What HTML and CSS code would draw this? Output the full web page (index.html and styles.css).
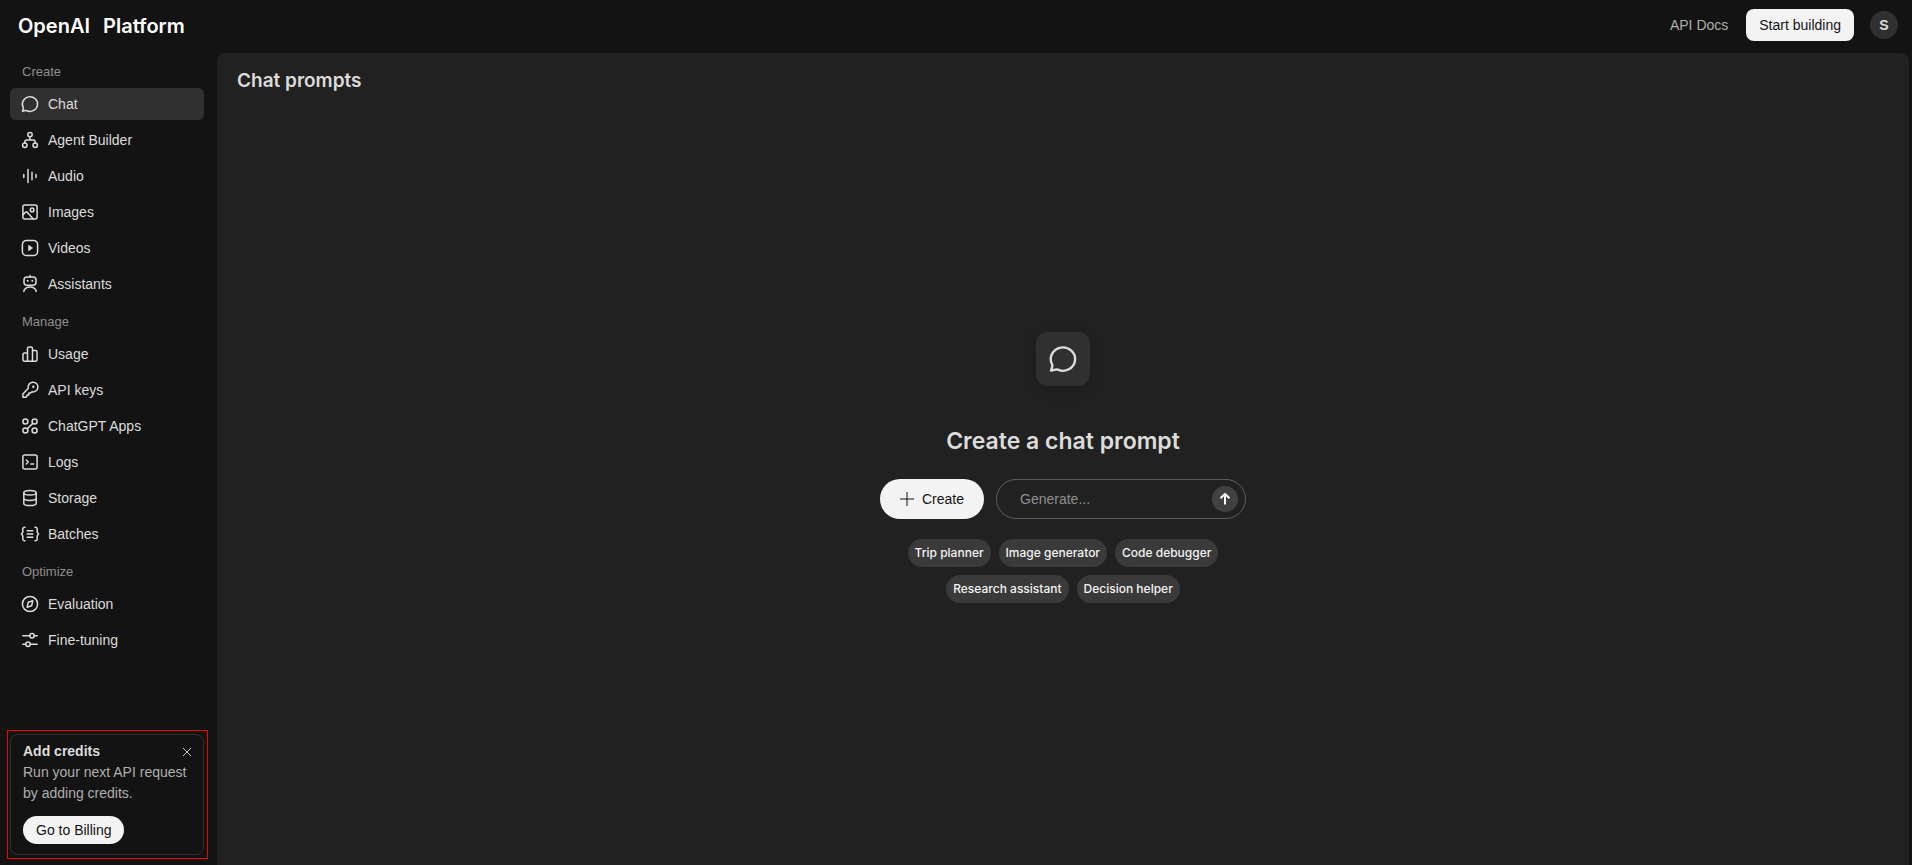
FILE: index.html
```html
<!DOCTYPE html>
<html lang="en">
<head>
  <meta charset="UTF-8">
  <meta name="viewport" content="width=device-width, initial-scale=1">
  <title>Chat prompts - OpenAI Platform</title>
  <link rel="stylesheet" href="styles.css">
</head>
<body>
  <header class="topbar">
    <a class="brand" href="#"><span>OpenAI</span><span>Platform</span></a>
    <div class="topbar-actions">
      <a class="docs-link" href="#">API Docs</a>
      <button class="start-btn" type="button">Start building</button>
      <button class="avatar" type="button" aria-label="Account">S</button>
    </div>
  </header>

  <div class="layout">
    <aside class="sidebar">
      <nav>
        <!-- Create -->
        <h2 class="nav-label">Create</h2>
        <ul class="nav-list">
          <li><a class="nav-item active" href="#">
            <svg class="icon" viewBox="0 0 20 20"><path d="M3.200 13.400A7.600 7.300 0 1 1 6.800 16.700c-.5-.2-1-.2-1.500-.1l-2.800.6.700-2.200c.2-.5.2-1.100 0-1.600z"/></svg>
            Chat</a></li>
          <li><a class="nav-item" href="#">
            <svg class="icon" viewBox="0 0 20 20"><circle cx="10" cy="4.6" r="2.2"/><circle cx="4.8" cy="15.3" r="2.2"/><circle cx="15.2" cy="15.3" r="2.2"/><path d="M10 6.8v3.1M4.8 13.1v-1.200a2 2 0 0 1 2-2h6.400a2 2 0 0 1 2 2v1.200"/></svg>
            Agent Builder</a></li>
          <li><a class="nav-item" href="#">
            <svg class="icon" viewBox="0 0 20 20"><path d="M3.800 8.500v3M8 3.500v13M12 6.300v7.400M16 8.500v3"/></svg>
            Audio</a></li>
          <li><a class="nav-item" href="#">
            <svg class="icon" viewBox="0 0 20 20"><rect x="2.900" y="2.900" width="14.200" height="14.200" rx="2"/><circle cx="12.100" cy="7.900" r="1.800"/><path d="M3 12.600l2.500-2.300a1.300 1.300 0 0 1 1.800 0l5.700 6.500"/></svg>
            Images</a></li>
          <li><a class="nav-item" href="#">
            <svg class="icon" viewBox="0 0 20 20"><rect x="2.400" y="2.400" width="15.200" height="15.200" rx="4.200"/><path class="fill" d="M8.200 7.300v5.400c0 .3.3.4.5.3l4.100-2.700c.2-.1.2-.5 0-.6L8.700 7c-.2-.1-.5 0-.5.3z"/></svg>
            Videos</a></li>
          <li><a class="nav-item" href="#">
            <svg class="icon" viewBox="0 0 20 20"><path d="M10 1.500V3M3.800 17.600a6.200 4.500 0 0 1 12.400 0"/><rect x="4" y="3" width="12" height="8.200" rx="3"/><circle class="fill" cx="7.700" cy="6.700" r="1"/><circle class="fill" cx="12.300" cy="6.700" r="1"/></svg>
            Assistants</a></li>
        </ul>

        <!-- Manage -->
        <h2 class="nav-label">Manage</h2>
        <ul class="nav-list">
          <li><a class="nav-item" href="#">
            <svg class="icon" viewBox="0 0 20 20"><path d="M7.500 17.200V4.500A1.500 1.500 0 0 1 9 3h2a1.500 1.500 0 0 1 1.500 1.500v12.700M7.500 9h-3A1.500 1.500 0 0 0 3 10.500v5.200a1.500 1.500 0 0 0 1.500 1.500h11a1.500 1.500 0 0 0 1.500-1.500V8a1.500 1.500 0 0 0-1.500-1.500h-3"/></svg>
            Usage</a></li>
          <li><a class="nav-item" href="#">
            <svg class="icon" viewBox="0 0 20 20"><path d="M8.300 8.300a4.900 4.900 0 1 1 3.600 3.500L10.600 13H8.800v1.900H7v1.200l-1 1.100H2.900V14z"/><circle class="fill" cx="13.300" cy="6.800" r="1.200"/></svg>
            API keys</a></li>
          <li><a class="nav-item" href="#">
            <svg class="icon" viewBox="0 0 20 20"><circle cx="5.400" cy="5.600" r="2.500"/><circle cx="14.600" cy="5.600" r="2.500"/><circle cx="5.400" cy="14.600" r="2.500"/><circle cx="14.600" cy="14.600" r="2.500"/><path d="M12.800 7.400l-5.600 5.400"/></svg>
            ChatGPT Apps</a></li>
          <li><a class="nav-item" href="#">
            <svg class="icon" viewBox="0 0 20 20"><rect x="2.900" y="2.900" width="14.200" height="14.200" rx="2"/><path d="M6.300 8l2 2-2 2M10.800 12h2.800"/></svg>
            Logs</a></li>
          <li><a class="nav-item" href="#">
            <svg class="icon" viewBox="0 0 20 20"><ellipse cx="10" cy="4.800" rx="6.200" ry="2.300"/><path d="M3.800 4.800v10.400c0 1.300 2.800 2.400 6.200 2.400s6.200-1.100 6.200-2.400V4.800M3.800 10c0 1.300 2.800 2.400 6.200 2.400s6.200-1.100 6.200-2.400"/></svg>
            Storage</a></li>
          <li><a class="nav-item" href="#">
            <svg class="icon" viewBox="0 0 20 20"><path d="M5 3.200h-.5a1.700 1.700 0 0 0-1.700 1.700v3.200L1.500 10l1.300 1.900v3.200a1.700 1.700 0 0 0 1.700 1.700H5M15 3.200h.5a1.700 1.700 0 0 1 1.700 1.700v3.200l1.300 1.900-1.300 1.900v3.200a1.700 1.700 0 0 1-1.700 1.700H15M7.200 6.800h5.600M7.200 10h5.600M7.200 13.200h5.600"/></svg>
            Batches</a></li>
        </ul>

        <!-- Optimize -->
        <h2 class="nav-label">Optimize</h2>
        <ul class="nav-list">
          <li><a class="nav-item" href="#">
            <svg class="icon" viewBox="0 0 20 20"><circle cx="10" cy="10" r="7.600"/><path d="M8.200 8.200l4.600-1.400-1.200 4.900-4.400 1.500z"/></svg>
            Evaluation</a></li>
          <li><a class="nav-item" href="#">
            <svg class="icon" viewBox="0 0 20 20"><circle cx="12" cy="5.800" r="2.200"/><circle cx="8" cy="14.200" r="2.200"/><path d="M2.800 5.800h7M14.200 5.800h3M2.800 14.200h3M10.200 14.200h7"/></svg>
            Fine-tuning</a></li>
        </ul>
      </nav>

      <div class="credits-outline">
        <section class="credits">
          <div class="credits-head">
            <h3>Add credits</h3>
            <button class="close-btn" type="button" aria-label="Close">
              <svg viewBox="0 0 10 10"><path d="M1 1l8 8M9 1L1 9"/></svg>
            </button>
          </div>
          <p>Run your next API request by adding credits.</p>
          <button class="billing-btn" type="button">Go to Billing</button>
        </section>
      </div>
    </aside>

    <main class="panel">
      <h1 class="panel-title">Chat prompts</h1>
      <div class="empty">
        <div class="tile">
          <svg class="icon" viewBox="0 0 20 20"><path d="M3.200 13.400A7.600 7.300 0 1 1 6.800 16.700c-.5-.2-1-.2-1.500-.1l-2.800.6.700-2.200c.2-.5.2-1.100 0-1.600z"/></svg>
        </div>
        <h2 class="empty-title">Create a chat prompt</h2>
        <div class="actions">
          <button class="create-btn" type="button">
            <svg viewBox="0 0 14 14"><path d="M7 0v14M0 7h14"/></svg>
            Create
          </button>
          <form class="generate">
            <input type="text" placeholder="Generate..." aria-label="Generate">
            <button class="send-btn" type="button" aria-label="Send">
              <svg viewBox="0 0 12 12"><path d="M6 11.500V1M1.500 5.300L6 .9l4.500 4.400"/></svg>
            </button>
          </form>
        </div>
        <div class="chips">
          <button type="button">Trip planner</button>
          <button type="button">Image generator</button>
          <button type="button">Code debugger</button>
          <button type="button">Research assistant</button>
          <button type="button">Decision helper</button>
        </div>
      </div>
    </main>
  </div>
</body>
</html>
```
FILE: styles.css
```css
* {
  box-sizing: border-box;
}
body {
  margin: 0;
  min-height: 100vh;
  display: flex;
  flex-direction: column;
  background: #131313;
  color: #dcdcdc;
  font-family: "Liberation Sans", Arial, sans-serif;
  font-size: 14px;
  line-height: 20px;
}
h1, h2, h3, p, ul {
  margin: 0;
  padding: 0;
}
a {
  color: inherit;
  text-decoration: none;
}
button {
  border: none;
  padding: 0;
  font: inherit;
  cursor: pointer;
}
svg {
  fill: none;
  stroke: currentColor;
}
.brand,
.panel-title,
.empty-title,
.chips button {
  font-family: Inter, "Liberation Sans", sans-serif;
}

/* Top bar */
.topbar {
  display: flex;
  align-items: center;
  justify-content: space-between;
  height: 53px;
  padding: 0 14px 3px 18px;
}
.brand {
  display: flex;
  gap: 13px;
  padding-top: 2px;
  color: #fff;
  font-size: 20px;
  font-weight: 600;
}
.topbar-actions {
  display: flex;
  align-items: center;
}
.docs-link {
  margin-right: 18px;
  color: #afafaf;
}
.start-btn {
  height: 32px;
  margin-right: 16px;
  padding: 0 13px;
  border-radius: 8px;
  background: #f3f3f3;
  color: #131313;
}
.avatar {
  width: 28px;
  height: 28px;
  border-radius: 50%;
  background: #303030;
  color: #dcdcdc;
  font-weight: 600;
}

/* Sidebar */
.layout {
  flex: 1;
  display: flex;
}
.sidebar {
  flex: none;
  display: flex;
  flex-direction: column;
  justify-content: space-between;
  width: 217px;
  padding: 0 9px 6px 7px;
}
.sidebar nav {
  padding: 0 4px 0 3px;
}
.nav-label {
  padding: 12px 12px 6px;
  color: #8f8f8f;
  font-size: 13px;
  font-weight: 400;
}
.nav-label:first-child {
  padding-top: 9px;
}
.nav-list {
  display: flex;
  flex-direction: column;
  gap: 4px;
  list-style: none;
}
.nav-item {
  display: flex;
  align-items: center;
  gap: 8px;
  height: 32px;
  padding: 0 10px;
  border-radius: 6px;
}
.nav-item:hover,
.nav-item.active {
  background: #303030;
}
.icon {
  width: 20px;
  height: 20px;
  stroke-width: 1.5;
  stroke-linecap: round;
  stroke-linejoin: round;
}
.icon .fill {
  fill: currentColor;
  stroke: none;
}

/* Credits card */
.credits-outline {
  padding: 3px 3px 3px 2px;
  border: 1px solid #f00000;
}
.credits {
  padding: 6px 11px 10px 12px;
  border: 1px solid #303030;
  border-radius: 8px;
}
.credits-head {
  display: flex;
  align-items: center;
  justify-content: space-between;
}
.credits h3 {
  font-size: 14px;
  font-weight: 600;
}
.credits h3,
.credits p {
  line-height: 21px;
}
.credits p {
  color: #afafaf;
}
.close-btn {
  display: flex;
  background: none;
  color: #cdcdcd;
}
.close-btn svg {
  width: 10px;
  height: 10px;
}
.billing-btn {
  height: 28px;
  margin-top: 12px;
  padding: 0 13px;
  border-radius: 14px;
  background: #f3f3f3;
  color: #131313;
}

/* Main panel */
.panel {
  flex: 1;
  display: flex;
  flex-direction: column;
  margin-right: 3px;
  border-radius: 8px 8px 0 0;
  background: #212121;
}
.panel-title {
  padding: 16px 20px;
  font-size: 19px;
  font-weight: 600;
  line-height: 24px;
}
.empty {
  flex: 1;
  display: flex;
  flex-direction: column;
  align-items: center;
  justify-content: center;
  padding-bottom: 39px;
}
.tile {
  display: grid;
  place-items: center;
  width: 54px;
  height: 54px;
  border-radius: 12px;
  background: #303030;
  box-shadow: 0 4px 12px rgba(0, 0, 0, 0.15);
}
.tile .icon {
  width: 32px;
  height: 32px;
}
.empty-title {
  margin: 39px 0 22px;
  font-size: 23px;
  font-weight: 600;
  line-height: 32px;
}
.actions {
  display: flex;
  gap: 12px;
}
.create-btn {
  display: flex;
  align-items: center;
  gap: 8px;
  height: 40px;
  padding: 0 20px;
  border-radius: 20px;
  background: #f3f3f3;
  color: #131313;
}
.create-btn svg {
  width: 14px;
  height: 14px;
}
.generate {
  display: flex;
  align-items: center;
  width: 250px;
  height: 40px;
  padding: 0 7px 0 23px;
  border: 1px solid #5d5d5d;
  border-radius: 20px;
}
.generate input {
  flex: 1;
  min-width: 0;
  padding: 0;
  border: none;
  outline: none;
  background: none;
  color: #dcdcdc;
  font: inherit;
}
.generate input::placeholder {
  color: #8f8f8f;
}
.send-btn {
  display: grid;
  place-items: center;
  width: 26px;
  height: 26px;
  border-radius: 50%;
  background: #414141;
  color: #fff;
}
.send-btn svg {
  width: 12px;
  height: 12px;
  stroke-width: 2;
}
.chips {
  display: flex;
  flex-wrap: wrap;
  justify-content: center;
  gap: 8px;
  max-width: 366px;
  margin-top: 20px;
}
.chips button {
  height: 28px;
  padding: 0 7px;
  border-radius: 14px;
  background: #3a3a3a;
  color: #f3f3f3;
  font-size: 12px;
  font-weight: 500;
}
```
